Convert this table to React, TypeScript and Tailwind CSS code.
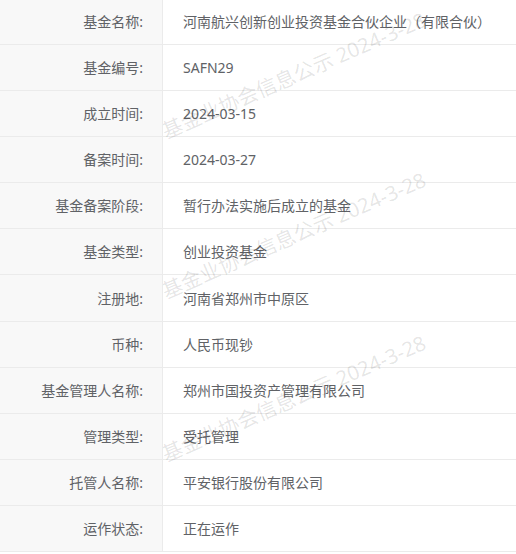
import React from 'react';

const rows: [string, string][] = [
  ['基金名称:', '河南航兴创新创业投资基金合伙企业（有限合伙）'],
  ['基金编号:', 'SAFN29'],
  ['成立时间:', '2024-03-15'],
  ['备案时间:', '2024-03-27'],
  ['基金备案阶段:', '暂行办法实施后成立的基金'],
  ['基金类型:', '创业投资基金'],
  ['注册地:', '河南省郑州市中原区'],
  ['币种:', '人民币现钞'],
  ['基金管理人名称:', '郑州市国投资产管理有限公司'],
  ['管理类型:', '受托管理'],
  ['托管人名称:', '平安银行股份有限公司'],
  ['运作状态:', '正在运作'],
];

const watermarkTops = [121, 281, 444];

export default function App() {
  return (
    <div
      className="relative w-[516px] h-[554px] overflow-hidden bg-white text-[14px] text-[#606266]"
      style={{ fontFamily: '"Noto Sans", "Noto Sans CJK SC", sans-serif' }}
    >
      <div className="mt-[-1.1px] flex flex-col">
        {rows.map(([label, value]) => (
          <div key={label} className="flex h-[46.1px] border-b border-[#ebebeb]">
            <div className="flex w-[163px] shrink-0 items-center justify-end border-r border-[#ebebeb] bg-[#f8f8f8] pr-[19px]">
              {label}
            </div>
            <div className="flex flex-1 items-center pl-[20px]">{value}</div>
          </div>
        ))}
      </div>

      {/* watermark overlay, value column only */}
      <div className="pointer-events-none absolute inset-y-0 left-[163px] right-0 overflow-hidden">
        {watermarkTops.map((top) => (
          <span
            key={top}
            className="absolute left-[4px] origin-bottom-left -rotate-[23.5deg] whitespace-nowrap text-[20.5px] leading-[20.5px] text-black/[0.11]"
            style={{ top }}
          >
            基金业协会信息公示 2024-3-28
          </span>
        ))}
      </div>
    </div>
  );
}
